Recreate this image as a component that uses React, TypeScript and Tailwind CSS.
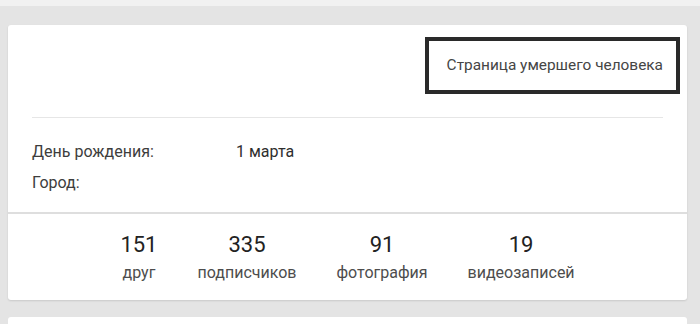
export default function App() {
  const stats = [
    { value: '151', label: 'друг' },
    { value: '335', label: 'подписчиков' },
    { value: '91', label: 'фотография' },
    { value: '19', label: 'видеозаписей' },
  ]

  return (
    <div className="w-[700px] h-[324px] overflow-hidden bg-[#e4e4e4] font-['Roboto',sans-serif]">
      <div className="h-[6px] bg-[#f1f1f1]" />
      <div className="pl-[8px] pr-[13px] pt-[19px]">
        <div className="bg-white rounded-[3px] shadow-[0_1px_2px_rgba(0,0,0,0.12)]">
          {/* header */}
          <div className="px-[24px] pt-[12px]">
            <div className="flex justify-end h-[80px]">
              <div className="h-[57px] w-[255px] border-[4px] border-[#2a2a2a] flex items-center justify-end pr-[13px] mr-[-17px]">
                <span className="text-[15.4px] text-[#454545]">Страница умершего человека</span>
              </div>
            </div>
            <div className="h-px bg-[#e6e6e6]" />
            <div className="pt-[18px] pb-[14px] text-[16px] text-[#3d3d3d]">
              <div className="flex h-[31px] items-center">
                <span className="w-[204px]">День рождения:</span>
                <span className="text-[#2e2e2e]">1 марта</span>
              </div>
              <div className="flex h-[31px] items-center">
                <span>Город:</span>
              </div>
            </div>
          </div>
          <div className="h-[2px] bg-[#dedede]" />
          {/* counters */}
          <div className="flex justify-center pt-[17px] pb-[13px]">
            {stats.map((s) => (
              <div key={s.label} className="flex flex-col items-center px-[20px]">
                <span className="text-[22px] leading-[28px] text-[#222]">{s.value}</span>
                <span className="text-[16px] leading-[28px] text-[#4d4d4d]">{s.label}</span>
              </div>
            ))}
          </div>
        </div>
        <div className="mt-[17px] h-[20px] bg-white rounded-[3px]" />
      </div>
    </div>
  )
}
